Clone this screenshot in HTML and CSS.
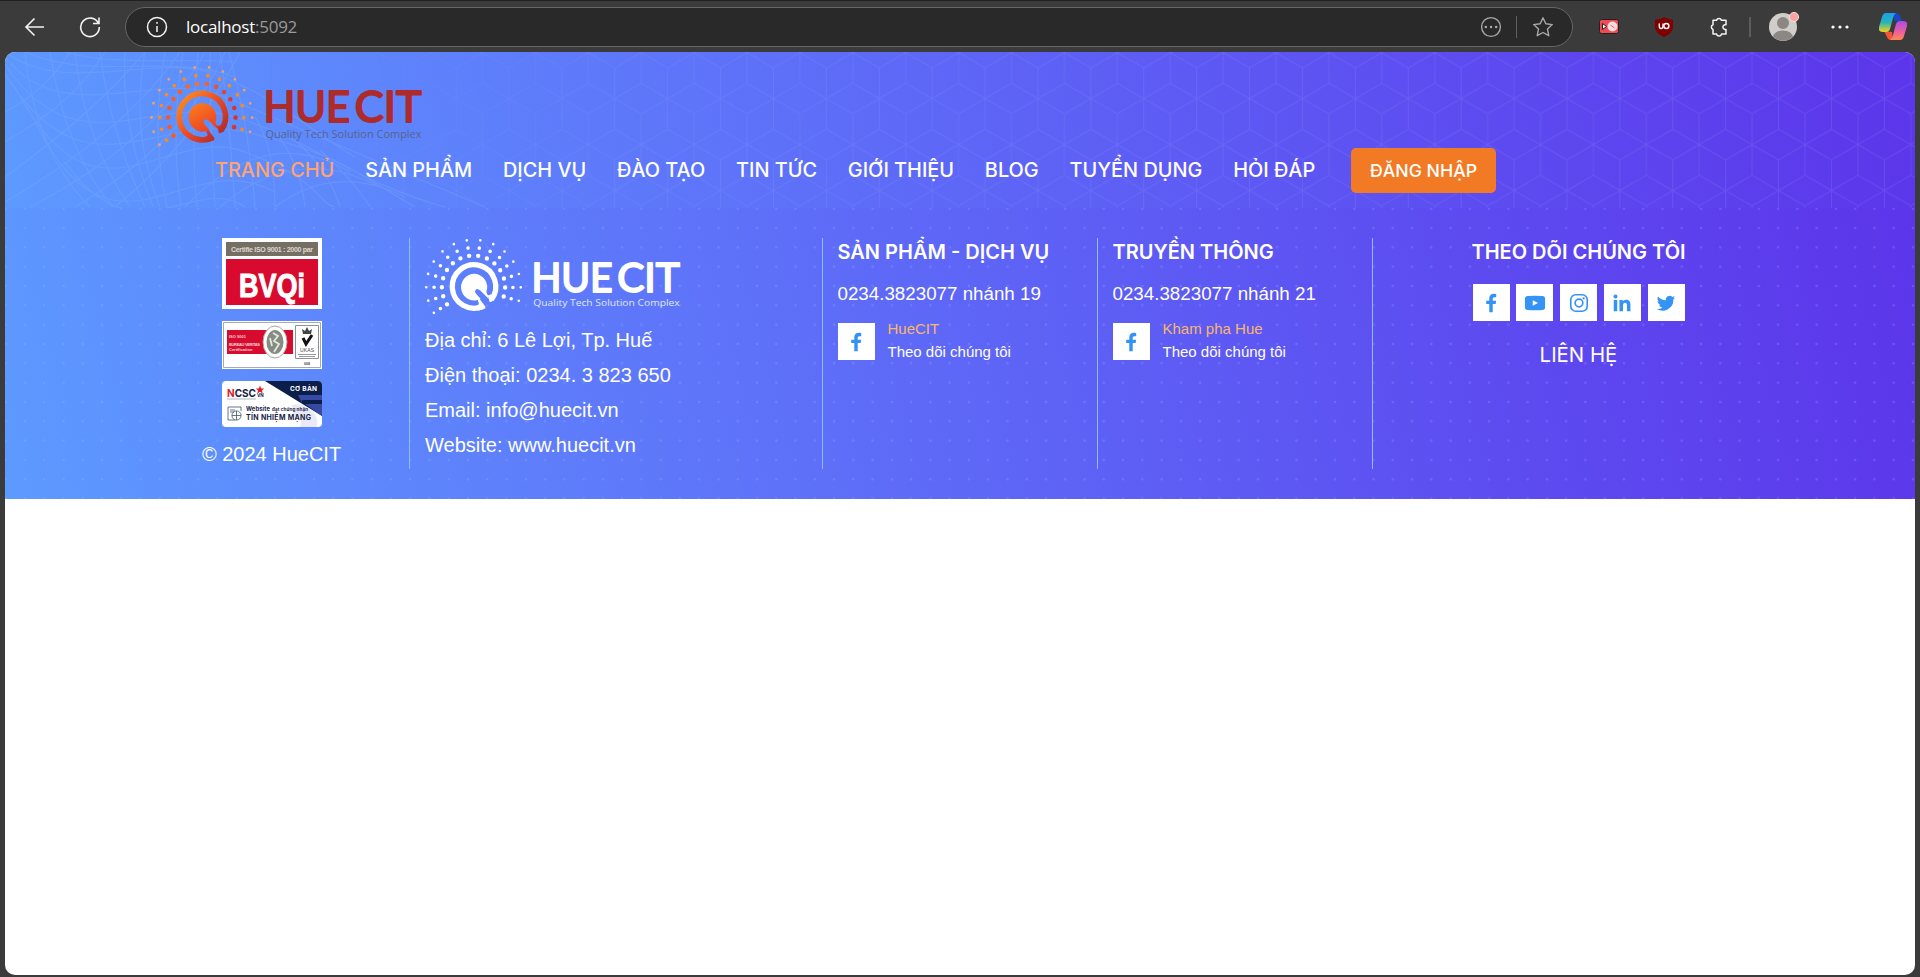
FILE: index.html
```html
<!DOCTYPE html>
<html lang="vi">
<head>
<meta charset="utf-8">
<title>HueCIT</title>
<link rel="stylesheet" href="styles.css">
</head>
<body>
<svg class="defs" width="0" height="0">
  <defs>
    <linearGradient id="sun" x1="107" y1="120" x2="240" y2="240" gradientUnits="userSpaceOnUse"><stop offset="0" stop-color="#fb9122"/><stop offset=".5" stop-color="#f04e23"/><stop offset="1" stop-color="#ad2a2c"/></linearGradient>
    <linearGradient id="core" x1="160" y1="135" x2="205" y2="215" gradientUnits="userSpaceOnUse"><stop offset="0" stop-color="#fb7a1e"/><stop offset="1" stop-color="#ea4325"/></linearGradient>
    <linearGradient id="rays" x1="85" y1="0" x2="290" y2="0" gradientUnits="userSpaceOnUse"><stop offset="0" stop-color="#f4582a"/><stop offset=".45" stop-color="#f4722a"/><stop offset="1" stop-color="#cf3430"/></linearGradient>
    <symbol id="logo" viewBox="30 18 818 246">
      <g fill="none" stroke-linecap="round">
        <path class="ray1" d="M100.3 230A101 101 0 1 1 269.700 230" pathLength="246.1" stroke-dasharray="0 16.4" stroke-width="14"/>
        <path class="ray2" d="M79.300 243.600A126 126 0 1 1 290.700 243.600" pathLength="246.1" stroke-dasharray="0 16.4" stroke-width="11.5"/>
        <path class="ray3" d="M58.400 257.200A151 151 0 1 1 311.600 257.200" pathLength="246.1" stroke-dasharray="0 16.4" stroke-width="8.5"/>
      </g>
      <g class="ring" fill="none" stroke-width="17">
        <path d="M216 236A69.500 69.500 0 1 1 242 215"/>
      </g>
      <path class="ring-fill" d="M204 212L222 236Q226 243 216 246L200 250L196 233Q206 232 200 222Q197 215 204 212ZM206 184L233 208L236 222Q243 225 248 215L256 203L240 198Q233 205 226 195Z"/>
      <path class="core" d="M185 132A43 43 0 0 1 226 190L234 213L207 186Q193 175 190 188Q189 192 194 197L208 213A43 43 0 1 1 185 132Z"/>
      <g class="word" font-family="Lato" font-size="128">
        <text x="370" y="189" textLength="260" lengthAdjust="spacingAndGlyphs">HUE</text>
        <text x="644" y="189" textLength="200" lengthAdjust="spacingAndGlyphs">CIT</text>
      </g>
      <text class="tag" x="376" y="236" textLength="468" lengthAdjust="spacingAndGlyphs" font-family="Open Sans" font-size="31">Quality Tech Solution Complex</text>
    </symbol>
    <symbol id="facebook" viewBox="0 0 24 24"><path d="M13.9 22v-8.900h3.200l.5-3.500h-3.700V7.500c0-1.100.6-1.900 2-1.900h1.800V2.400S16.400 2 15.100 2C12.100 2 10.100 3.900 10.100 7v2.600H6.800v3.500h3.300V22z"/></symbol>
    <symbol id="youtube" viewBox="0 0 24 24"><path fill-rule="evenodd" d="M4 4.400Q12 3.700 20 4.400Q23 4.700 23 7.500V16.500Q23 19.300 20 19.600Q12 20.300 4 19.600Q1 19.300 1 16.500V7.500Q1 4.700 4 4.400ZM9.500 9v6l5.800-3z"/></symbol>
    <symbol id="instagram" viewBox="0 0 24 24"><g fill="none" stroke="currentColor" stroke-width="1.8"><rect x="3" y="3" width="18" height="18" rx="5.500"/><circle cx="12" cy="12" r="4.200"/></g><circle cx="17" cy="7" r="1.200"/></symbol>
    <symbol id="linkedin" viewBox="0 0 24 24"><circle cx="4.900" cy="5" r="2.200"/><path d="M3 8.800h3.800V21H3zM9.200 8.800h3.600v1.700c.6-1.100 1.900-2 3.800-2 3.800 0 4.600 2.500 4.600 5.800V21h-3.800v-6c0-1.400 0-3.300-2-3.300s-2.300 1.600-2.300 3.200V21H9.200z"/></symbol>
    <symbol id="twitter" viewBox="0 0 24 24"><path d="M22 5.900c-.7.300-1.500.6-2.300.7.8-.5 1.500-1.300 1.800-2.200-.8.500-1.700.8-2.600 1a4.100 4.100 0 0 0-7 3.700A11.700 11.700 0 0 1 3.400 4.800a4.100 4.100 0 0 0 1.300 5.500c-.7 0-1.300-.2-1.900-.5 0 2 1.400 3.700 3.300 4.100-.6.200-1.200.2-1.800.1a4.100 4.100 0 0 0 3.800 2.800A8.300 8.300 0 0 1 2 18.500 11.700 11.700 0 0 0 20 8.100c.8-.6 1.500-1.300 2-2.200z"/></symbol>
  </defs>
</svg>

<div class="toolbar">
  <svg class="nav-icon back" width="22" height="20" viewBox="0 0 22 20"><path d="M20 10H2M10.500 1.500L2 10l8.500 8.500"/></svg>
  <svg class="nav-icon reload" width="22" height="22" viewBox="0 0 22 22"><path d="M19.500 7.500A9.300 9.300 0 1 0 20.300 11M20 1.500v6h-6"/></svg>
  <div class="address">
    <svg width="22" height="22" viewBox="0 0 22 22" class="info"><circle cx="11" cy="11" r="9.500"/><path d="M11 10v6M11 6v1.700"/></svg>
    <span class="host">localhost<span class="port">:5092</span></span>
    <svg class="more-round" width="22" height="22" viewBox="0 0 22 22"><circle cx="11" cy="11" r="9.400"/><path d="M5.800 11h.1M11 11h.1M16.100 11h.1"/></svg>
    <i class="bar"></i>
    <svg class="star" width="22" height="22" viewBox="0 0 22 22"><path d="M11 1.800l2.800 6 6.500.8-4.800 4.500 1.300 6.600-5.800-3.200-5.800 3.200 1.300-6.600L1.700 8.600l6.500-.8z"/></svg>
  </div>
  <div class="extensions">
    <svg class="ext" width="20" height="15" viewBox="0 0 20 15"><rect x=".5" y=".5" width="19" height="14" rx="2" fill="#ef4b55" stroke="#222"/><path d="M3.500 4.500v6l4-3z" fill="#fff" stroke="#222"/><circle cx="13.500" cy="7.500" r="5" fill="#fbdcdc"/><path d="M11.500 6l4 3" stroke="#ef6a70"/></svg>
    <svg class="ublock" width="18" height="20" viewBox="0 0 18 20"><path d="M9 0Q13 2.500 18 2.800V11Q17.500 16 9 20Q.5 16 0 11V2.800Q5 2.500 9 0Z" fill="#800000"/><path d="M4.300 6.500v3q0 2 1.800 2t1.900-2v-3M8 6.500v2.500" fill="none" stroke="#fff" stroke-width="1.400"/><circle cx="11.400" cy="9" r="2.500" fill="none" stroke="#fff" stroke-width="1.400"/></svg>
    <svg class="puzzle" width="20" height="20" viewBox="0 0 20 20"><path d="M4 3.300h3.600a2.500 2.500 0 0 1 4.800 0H17v4.400h-1.200a2.400 2.400 0 0 0 0 4.700H17v4.700h-4.500a2.500 2.500 0 0 1-4.900 0H4v-4.700a2.500 2.500 0 0 1 0-4.700z"/></svg>
    <i class="bar light"></i>
    <svg class="avatar" width="31" height="30" viewBox="0 0 31 30"><circle cx="14" cy="15" r="14" fill="#d0cecb"/><circle cx="14" cy="11" r="6" fill="#8b8782"/><path d="M4 24.500Q6 18.500 14 18.500T24 24.500A14 14 0 0 1 4 24.500Z" fill="#8b8782"/><circle cx="25" cy="5" r="4.600" fill="#ffa39c" stroke="#e8e4e1"/></svg>
    <svg class="dots" width="18" height="4" viewBox="0 0 18 4"><circle cx="2" cy="2" r="1.600"/><circle cx="9" cy="2" r="1.600"/><circle cx="16" cy="2" r="1.600"/></svg>
    <svg class="copilot" width="28" height="27" viewBox="0 0 28 27">
      <defs><linearGradient id="cpa" x1="0" y1="0" x2="0" y2="1"><stop offset="0" stop-color="#1a9ff1"/><stop offset=".5" stop-color="#28b4b5"/><stop offset="1" stop-color="#f2d21b"/></linearGradient><linearGradient id="cpb" x1="0" y1="0" x2="0" y2="1"><stop offset="0" stop-color="#a64de8"/><stop offset=".6" stop-color="#f0609b"/><stop offset="1" stop-color="#ff8a4a"/></linearGradient></defs>
      <path d="M14 0h3q3 0 4 3l1.500 5h-7z" fill="#1748cc"/><path d="M5 18l8 1 1 8h-2q-3 0-4-3z" fill="#f3553c"/>
      <path d="M7 0h10q-2 1-3 5l-3 11q-1 3-4 3H4q-5 0-4-5L3 4q1-4 4-4z" fill="url(#cpa)"/><path d="M21 27H11q2-1 3-5l3-11q1-3 4-3h3q5 0 4 5l-3 10q-1 4-4 4z" fill="url(#cpb)"/>
    </svg>
  </div>
</div>

<div class="page">
  <header class="header">
    <svg class="pattern" width="1910" height="156">
      <defs>
        <pattern id="cubes" width="52.9" height="92" patternUnits="userSpaceOnUse" patternTransform="translate(1429.7 31.3)">
          <path d="M0 0L26.450 15.300L52.900 0M0 30.600L26.450 15.300L52.900 30.600M26.450 0V46M0 30.600V92M52.900 30.600V92M26.450 46L0 61.300L26.450 76.700L52.900 61.300L26.450 46M26.450 76.700V92" fill="none" stroke="#92a0ff" stroke-width="1"/>
        </pattern>
        <linearGradient id="fade"><stop offset=".1" stop-color="#000"/><stop offset=".32" stop-color="#fff"/></linearGradient>
        <mask id="m"><rect width="1910" height="156" fill="url(#fade)"/></mask>
      </defs>
      <rect width="1910" height="156" fill="url(#cubes)" opacity=".2" mask="url(#m)"/>
      <g class="waves">
        <path d="M0 12C70 120 150 40 230 65S350 130 440 155M0 22C80 150 150 60 240 80S350 120 410 155M0 5C60 80 150 15 220 45S350 100 480 155M10 35C90 190 160 70 240 100S310 150 330 155M30 70C110 230 180 90 270 140M60 110C130 210 190 120 240 155M0 0C60 45 150 0 210 22S300 75 350 105M20 0C90 30 160 0 230 25M60 0C110 15 180 5 230 10"/>
        <path d="M0 125Q90 60 140 0M0 150Q120 80 175 0M25 155Q150 90 200 0M70 155Q180 90 220 0M0 90Q70 50 100 0M0 60Q40 40 65 0M110 155Q190 90 235 0"/>
        <path d="M20 0Q30 100 85 155M45 0Q60 100 108 155M70 0Q80 90 125 155M95 0Q105 80 140 155M120 0Q115 70 148 155M140 0Q125 80 155 155M160 0Q145 80 162 155M178 0Q165 80 176 155M193 0Q185 80 192 155M205 0Q205 80 210 155M215 0Q225 70 230 155M224 0Q245 80 250 155M270 155Q270 95 250 65M300 155Q295 110 270 80M335 155Q325 120 290 88M365 155Q350 130 315 98M180 155Q260 70 345 120M215 155Q290 90 375 135M270 155Q330 110 400 145"/>
      </g>
    </svg>
    <a class="brand"><svg width="273" height="82"><use href="#logo"/></svg></a>
    <nav class="menu">
      <a class="active">TRANG CHỦ</a><a>SẢN PHẨM</a><a>DỊCH VỤ</a><a>ĐÀO TẠO</a><a>TIN TỨC</a><a>GIỚI THIỆU</a><a>BLOG</a><a>TUYỂN DỤNG</a><a>HỎI ĐÁP</a>
      <a class="login">ĐĂNG NHẬP</a>
    </nav>
  </header>

  <footer class="footer">
    <section class="col certs">
      <svg width="100" height="71" viewBox="0 0 100 71"><path fill="#fff" d="M0 0h100v71H0z"/><path fill="#756e63" d="M4 4h92v14H4z"/><path fill="#d80b2f" d="M4 21h92v46H4z"/><text x="9" y="14" textLength="82" font-family="Liberation Sans" font-weight="bold" font-size="7" fill="#ddd8cf">Certifie ISO 9001 : 2000 par</text><text x="17" y="59" font-family="Liberation Sans" font-weight="bold" font-size="33" fill="#fff" stroke="#fff" textLength="66" lengthAdjust="spacingAndGlyphs">BVQi</text></svg>
      <svg width="100" height="48" viewBox="0 0 100 48"><path fill="#fff" d="M0 0h100v48H0z"/><path fill="none" stroke="#a7aaa9" d="M1.500 1.500h97v45h-97z"/><path fill="#d80b2f" d="M5 9h66v24H5z"/><g fill="#fbd5da" font-family="Liberation Sans" font-weight="bold" font-size="4"><text x="7" y="17">ISO 9001</text><text x="7" y="25" textLength="31">BUREAU VERITAS</text><text x="7" y="30">Certification</text></g><ellipse cx="53" cy="21" rx="12" ry="16" fill="#fff" stroke="#a5a59d"/><ellipse cx="53" cy="21" rx="8.500" ry="12" fill="#858c80"/><path d="M51 12l5 3-4 5 5 3-5 8M48 17l2 8" fill="none" stroke="#e7e9e1" stroke-width="1.800"/><path fill="#fff" stroke="#8d9192" d="M73.500 4.500h23v33h-23z"/><path d="M80 8l3 2 2-4 2 4 3-2-1 5h-8z" fill="#444"/><path d="M81 17l3 6 6-9" fill="none" stroke="#111" stroke-width="3"/><text x="78" y="30.500" font-family="Liberation Sans" font-size="5" textLength="14" fill="#444">UKAS</text><path d="M76 33.500h18M77 35.500h16" stroke="#999"/><text x="82" y="44" font-family="Liberation Sans" font-weight="bold" font-size="3.500" fill="#444">008</text></svg>
      <svg class="ncsc" width="100" height="46" viewBox="0 0 100 46"><path fill="#fff" d="M0 0h100v46H0z"/><path fill="#0b1d49" d="M43 0h57v35z"/><path fill="#3549a5" d="M76 14h24v5H80v3zM83 23h17v12z"/><path d="M70 24q10-3 19 5 8 6 6 17H78q3-8-3-10-5-3-5-12z" fill="#e9e9f8"/><g font-family="Inter" font-weight="700" fill="#152345"><text x="5" y="16" font-size="11" textLength="29" lengthAdjust="spacingAndGlyphs"><tspan fill="#d9202c">N</tspan>CSC</text><text x="35" y="16" font-size="4.500">VN</text><text x="24" y="30" font-size="5.800" textLength="24">Website</text><text x="50" y="30" font-size="4.500" textLength="36">đạt chứng nhận</text><text x="24" y="39" font-size="7" textLength="65">TÍN NHIỆM MẠNG</text><text x="68" y="10" font-size="6.500" textLength="27" fill="#fff">CƠ BẢN</text></g><path d="M38 4.500l1.200 3h3l-2.300 2 .8 3-2.700-1.800-2.700 1.800.8-3-2.300-2h3z" fill="#e01f27"/><path d="M5 18h29" stroke="#9197a5" stroke-width=".7"/><g fill="none" stroke="#44546e" stroke-width=".8"><path d="M6 26h13v4M6 26v13h7M8 29h5M8 31h4"/><circle cx="14.500" cy="34.500" r="4.600"/><path d="M14.500 30v9M10 34.500h9"/></g></svg>
      <p>© 2024 HueCIT</p>
    </section>
    <section class="col contact">
      <svg class="white" width="256" height="77"><use href="#logo"/></svg>
      <p>Địa chỉ: 6 Lê Lợi, Tp. Huế</p><p>Điện thoại: 0234. 3 823 650</p><p>Email: info@huecit.vn</p><p>Website: www.huecit.vn</p>
    </section>
    <section class="col support">
      <h4>SẢN PHẨM - DỊCH VỤ</h4>
      <p class="phone">0234.3823077 nhánh 19</p>
      <div class="fan"><a class="square"><svg><use href="#facebook"/></svg></a><div><b>HueCIT</b><span>Theo dõi chúng tôi</span></div></div>
    </section>
    <section class="col support">
      <h4>TRUYỀN THÔNG</h4>
      <p class="phone">0234.3823077 nhánh 21</p>
      <div class="fan"><a class="square"><svg><use href="#facebook"/></svg></a><div><b>Kham pha Hue</b><span>Theo dõi chúng tôi</span></div></div>
    </section>
    <section class="col follow">
      <h4>THEO DÕI CHÚNG TÔI</h4>
      <div class="social"><a class="square"><svg><use href="#facebook"/></svg></a><a class="square"><svg><use href="#youtube"/></svg></a><a class="square"><svg><use href="#instagram"/></svg></a><a class="square"><svg><use href="#linkedin"/></svg></a><a class="square"><svg><use href="#twitter"/></svg></a></div>
      <p class="link">LIÊN HỆ</p>
    </section>
  </footer>
</div>
</body>
</html>
```

FILE: styles.css
```css
* { box-sizing: border-box; }
body { margin: 0; height: 977px; overflow: hidden; background: #3b3b3b; font-family: "Liberation Sans", Arial, sans-serif; color: #fff; }
p, h4 { margin: 0; }
svg { display: block; flex: none; }
.defs { position: absolute; }

/* Browser toolbar */
.toolbar { height: 52px; border-top: 1px solid #202020; display: flex; align-items: center; padding-left: 24px; }
.nav-icon { fill: none; stroke: #f2f2f2; stroke-width: 1.6; }
.reload { margin-left: 33px; }
.address { width: 1448px; height: 40px; margin-left: 24px; border: 1px solid #666; border-radius: 20px; background: #292929; display: flex; align-items: center; padding: 0 18px 0 20px; }
.info { fill: none; stroke: #f2f2f2; stroke-width: 1.5; }
.host { flex: 1; margin-left: 18px; font: 17px "Open Sans", sans-serif; letter-spacing: -.25px; white-space: nowrap; }
.port { color: #9a9a9a; }
.more-round, .star { fill: none; stroke: #a8a8a8; stroke-width: 1.4; }
.more-round path { stroke-width: 2.4; stroke-linecap: round; }
.star { stroke-linejoin: round; }
.bar { width: 1px; height: 22px; background: #606060; margin: 0 15px 0 14px; }
.bar.light { width: 2px; height: 20px; background: #5d5d5d; margin: 0 18px 0 20px; }
.extensions { display: flex; align-items: center; margin-left: 26px; }
.ublock { margin-left: 36px; }
.puzzle { margin-left: 36px; fill: none; stroke: #f5f5f5; stroke-width: 1.5; stroke-linejoin: round; }
.dots { margin-left: 31px; fill: #fff; }
.copilot { margin-left: 30px; }

/* Page surface */
.page { margin: 0 5px; height: 923px; background: #fff; border-radius: 10px; overflow: hidden; }
.header { position: relative; height: 156px; padding: 14px 0 0 146px; background: linear-gradient(75deg, #5d9aff, #5e78fa 33%, #5d52f2 70%, #5c35ea); }
.pattern { position: absolute; left: 0; top: 0; }
.waves { fill: none; stroke: #8bb8ff; stroke-width: 1.2; opacity: .24; }
.brand { position: relative; left: -1px; top: -1px; display: block; height: 82px; }
.ray1 { stroke: var(--logo, url(#rays)); }
.ray2 { stroke: var(--logo, #f58a2b); }
.ray3 { stroke: var(--logo, #f4a062); }
.ring { stroke: var(--logo, url(#sun)); }
.ring-fill { fill: var(--logo, url(#sun)); }
.core { fill: var(--logo, url(#core)); }
.word { fill: var(--logo, #ae2b2b); stroke: var(--logo, #ae2b2b); stroke-width: 6; stroke-linejoin: round; }
.tag { fill: var(--logo-tag, #56648f); }
.white { --logo: #fff; --logo-tag: #dfe6ff; }
.menu { position: relative; display: flex; align-items: center; height: 45px; margin-left: 64px; gap: 30.8px; font: 500 19.9px/24px Inter, sans-serif; white-space: nowrap; }
.menu a:not(.login) { margin-top: -2px; }
.menu .active { color: #ffa36f; }
.menu .login { display: flex; align-items: center; justify-content: center; width: 145px; height: 45px; margin-left: 5px; border-radius: 5px; background: #f27a24; font-size: 17.7px; }

/* Footer */
.footer { height: 291px; padding: 30px 0 0 129px; display: grid; grid-template-columns: 276px 412.5px 275px 275px 412px; grid-template-rows: 231px;
  background: radial-gradient(circle at 50% 50%, rgba(160,190,255,.23) 0 .8px, transparent 1.7px) 10.27px -9px / 19.27px 19.33px, linear-gradient(75deg, #5d9aff, #5e78fa 33%, #5d52f2 70%, #5c35ea); }
.col { border-right: 1px solid #8fbdf8; }
.certs { display: flex; flex-direction: column; align-items: center; gap: 12px; }
.certs p { font-size: 20px; line-height: 30px; }
.ncsc { border-radius: 4px; }
.contact { padding-left: 15px; }
.contact p { font-size: 20px; line-height: 35px; }
.contact svg { margin-bottom: 8px; }
.support { padding-left: 15px; }
h4 { font: 600 20px/28px Inter, sans-serif; white-space: nowrap; }
.phone { font-size: 18.75px; line-height: 28px; margin-top: 14px; }
.square { width: 37px; height: 37px; background: #fff; color: #3593f5; display: flex; align-items: center; justify-content: center; }
.square svg { width: 22px; height: 22px; fill: currentColor; }
.fan { display: flex; gap: 13px; margin-top: 15px; font-size: 15px; line-height: 23px; }
.fan div { margin-top: -6px; }
.fan b, .fan span { display: block; font-weight: 400; }
.fan b { color: #f8b76b; }
.follow { border: 0; display: flex; flex-direction: column; align-items: center; }
.social { display: flex; gap: 6.75px; margin-top: 18px; }
.link { font: 400 20.4px/28px Inter, sans-serif; margin-top: 20px; }
```
